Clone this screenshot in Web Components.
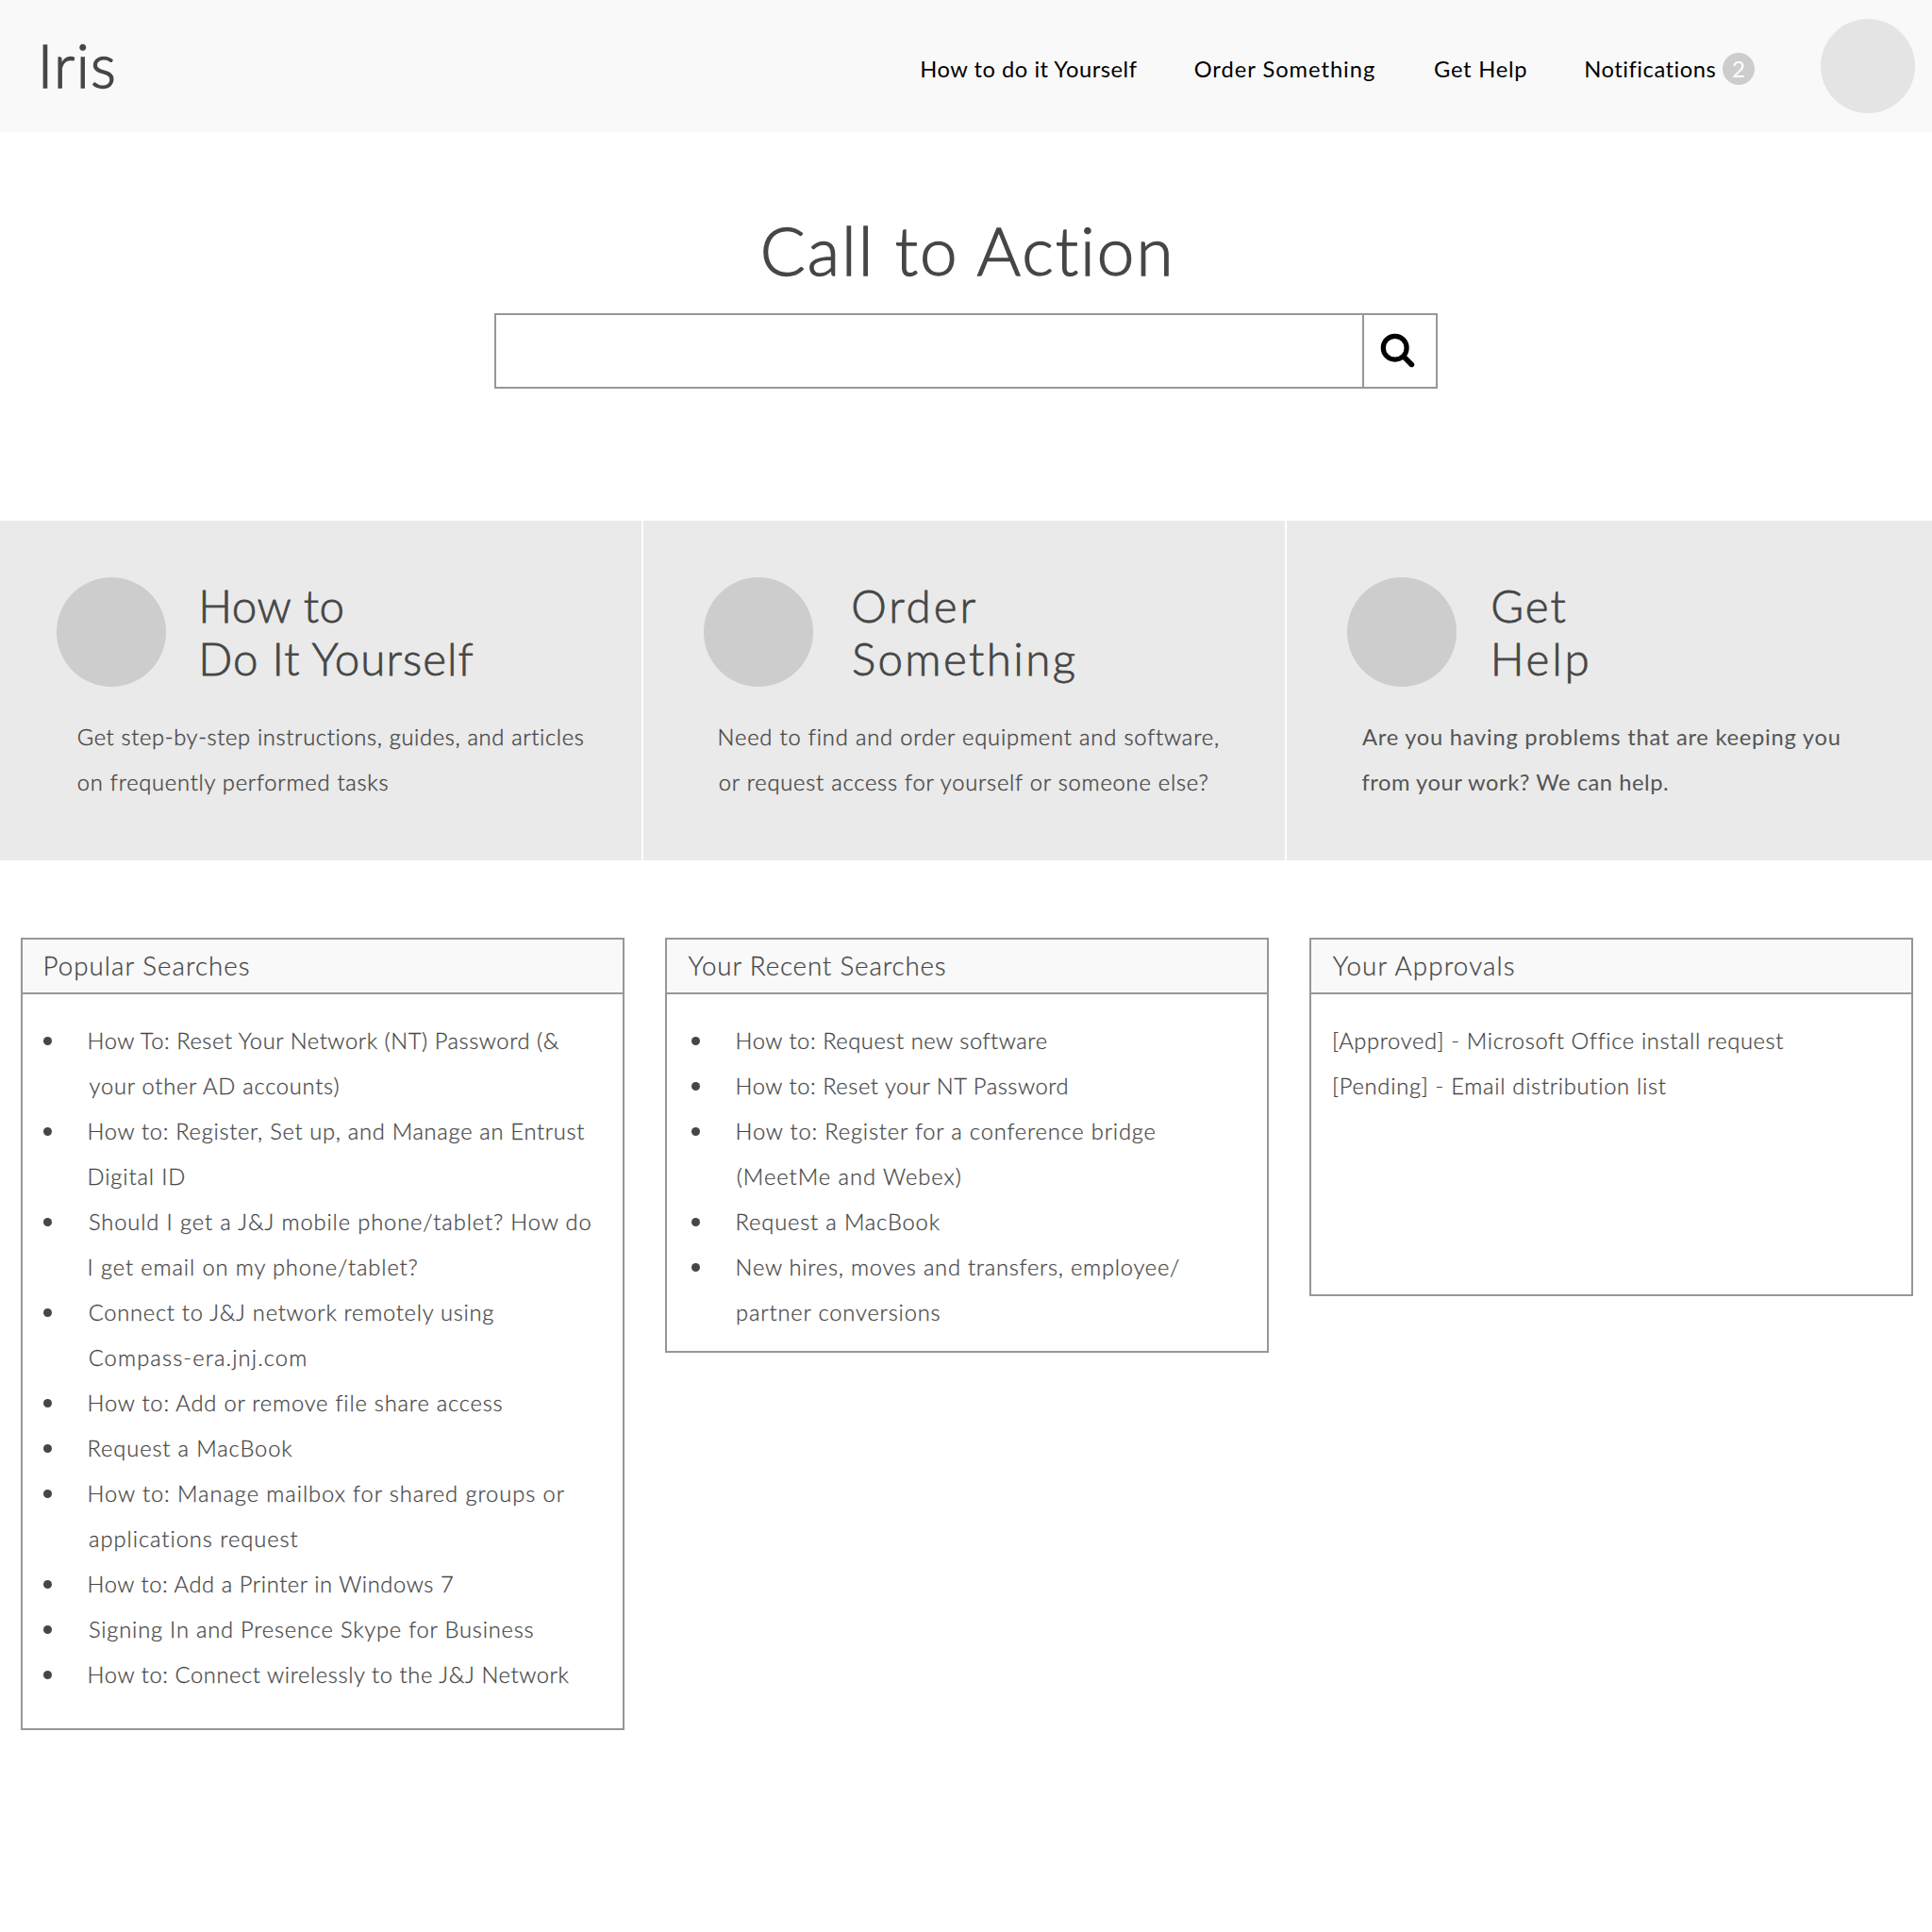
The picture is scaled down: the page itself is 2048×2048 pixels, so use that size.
<!DOCTYPE html>
<html lang="en">
<head>
<meta charset="utf-8">
<title>Iris</title>
<style>
  html, body { margin: 0; background: #fff; }
  body { font-family: Lato, "Open Sans", sans-serif; color: #464646; }
</style>
</head>
<body>
<iris-page>
  <iris-header slot="header">
    <fit-line slot="brand" w="75">Iris</fit-line>
    <fit-line w="227.5">How to do it Yourself</fit-line>
    <fit-line w="190.3" style="margin-left:61.8px">Order Something</fit-line>
    <fit-line w="96.7" style="margin-left:64px">Get Help</fit-line>
    <fit-line w="136.6" style="margin-left:63.7px">Notifications</fit-line>
    <count-badge>2</count-badge>
  </iris-header>

  <iris-search slot="hero"><fit-line w="430">Call to Action</fit-line></iris-search>

  <feature-card slot="feature" style="--inset:60px;--title-gap:38.7px;--text-inset:83px">
    <fit-line slot="title" w="148.3">How to</fit-line>
    <fit-line slot="title" w="286.6">Do It Yourself</fit-line>
    <fit-line w="535.3">Get step-by-step instructions, guides, and articles</fit-line>
    <fit-line w="327.7">on frequently performed tasks</fit-line>
  </feature-card>
  <feature-card slot="feature" style="--inset:64px;--title-gap:42.4px;--text-inset:81px">
    <fit-line slot="title" w="129.4">Order</fit-line>
    <fit-line slot="title" w="234.4">Something</fit-line>
    <fit-line w="528.1">Need to find and order equipment and software,</fit-line>
    <fit-line w="517">or request access for yourself or someone else?</fit-line>
  </feature-card>
  <feature-card slot="feature" style="--inset:64px;--title-gap:38.4px;--text-inset:80px;--weight:400;--ink:0;--text-color:#555">
    <fit-line slot="title" w="76.6">Get</fit-line>
    <fit-line slot="title" w="98" style="margin-left:1.8px">Help</fit-line>
    <fit-line w="505.7">Are you having problems that are keeping you</fit-line>
    <fit-line w="323.6">from your work? We can help.</fit-line>
  </feature-card>

  <list-panel slot="panel" style="height:840px">
    <fit-line slot="title" w="215.6" style="margin-left:24.2px">Popular Searches</fit-line>
    <bullet-item><fit-line w="497.4">How To: Reset Your Network (NT) Password (&amp;</fit-line><fit-line w="263.5">your other AD accounts)</fit-line></bullet-item>
    <bullet-item><fit-line w="524.6">How to: Register, Set up, and Manage an Entrust</fit-line><fit-line w="100">Digital ID</fit-line></bullet-item>
    <bullet-item><fit-line w="530.9">Should I get a J&amp;J mobile phone/tablet? How do</fit-line><fit-line w="347">I get email on my phone/tablet?</fit-line></bullet-item>
    <bullet-item><fit-line w="428.2">Connect to J&amp;J network remotely using</fit-line><fit-line w="228.7">Compass-era.jnj.com</fit-line></bullet-item>
    <bullet-item><fit-line w="437">How to: Add or remove file share access</fit-line></bullet-item>
    <bullet-item><fit-line w="214.4">Request a MacBook</fit-line></bullet-item>
    <bullet-item><fit-line w="503.2">How to: Manage mailbox for shared groups or</fit-line><fit-line w="220.6">applications request</fit-line></bullet-item>
    <bullet-item><fit-line w="385">How to: Add a Printer in Windows 7</fit-line></bullet-item>
    <bullet-item><fit-line w="470">Signing In and Presence Skype for Business</fit-line></bullet-item>
    <bullet-item><fit-line w="508">How to: Connect wirelessly to the J&amp;J Network</fit-line></bullet-item>
  </list-panel>
  <list-panel slot="panel" style="height:440px;--pad:25.5px">
    <fit-line slot="title" w="272.3" style="margin-left:22.6px">Your Recent Searches</fit-line>
    <bullet-item><fit-line w="327.2">How to: Request new software</fit-line></bullet-item>
    <bullet-item><fit-line w="349.1">How to: Reset your NT Password</fit-line></bullet-item>
    <bullet-item><fit-line w="442.3">How to: Register for a conference bridge</fit-line><fit-line w="235.7">(MeetMe and Webex)</fit-line></bullet-item>
    <bullet-item><fit-line w="213.8">Request a MacBook</fit-line></bullet-item>
    <bullet-item><fit-line w="467.8">New hires, moves and transfers, employee/</fit-line><fit-line w="213.8">partner conversions</fit-line></bullet-item>
  </list-panel>
  <list-panel slot="panel" style="height:380px;--pad:24.4px">
    <fit-line slot="title" w="192.1" style="margin-left:22.7px">Your Approvals</fit-line>
    <fit-line w="476.1">[Approved] - Microsoft Office install request</fit-line>
    <fit-line w="351.5">[Pending] - Email distribution list</fit-line>
  </list-panel>
</iris-page>

<script>
function define(name, html, setup) {
  const template = document.createElement('template');
  template.innerHTML = html;
  customElements.define(name, class extends HTMLElement {
    constructor() {
      super();
      this.attachShadow({ mode: 'open' }).append(template.content.cloneNode(true));
    }
    connectedCallback() { if (setup) setup(this); }
  });
}

define('iris-page', `
  <style>
    :host { display: block; width: 2048px; height: 2048px; overflow: hidden; background: #fff; }
    .features { display: grid; grid-template-columns: 680px 680px 1fr; gap: 2px; height: 360px; }
    .panels { display: flex; align-items: flex-start; gap: 43px; padding: 82px 20px 0 22px; }
  </style>
  <slot name="header"></slot>
  <slot name="hero"></slot>
  <section class="features"><slot name="feature"></slot></section>
  <section class="panels"><slot name="panel"></slot></section>`);

define('iris-header', `
  <style>
    :host { display: flex; align-items: center; box-sizing: border-box; height: 140px; padding: 0 18px 0 45.7px; background: #f9f9f9; }
    .brand { font-size: 63px; line-height: 80px; font-weight: 300; margin-top: -3px; -webkit-text-stroke: .022em; }
    nav { display: flex; align-items: center; margin-left: auto; padding-top: 5px; font-size: 23.7px; line-height: 34px; color: #000; }
    .avatar { width: 100px; height: 100px; border-radius: 50%; background: #e4e4e4; margin-left: 70px; }
  </style>
  <div class="brand"><slot name="brand"></slot></div>
  <nav><slot></slot></nav>
  <div class="avatar"></div>`);

define('count-badge', `
  <style>
    :host { display: grid; place-items: center; width: 34px; height: 34px; margin: 0 0 0 8px; border-radius: 50%; background: #cdcdcd; color: #fff; font-size: 24px; line-height: 34px; }
  </style>
  <span><slot></slot></span>`);

define('iris-search', `
  <style>
    :host { display: flex; flex-direction: column; align-items: center; box-sizing: border-box; height: 412px; padding-top: 85px; }
    h1 { margin: 0 0 27px; font-size: 71px; line-height: 80px; font-weight: 300; -webkit-text-stroke: .018em; }
    .box { display: flex; box-sizing: border-box; width: 1000px; height: 80px; border: 2px solid #979797; }
    input { flex: 1; min-width: 0; border: 0; outline: 0; padding: 0 20px; background: #fff; font: inherit; font-size: 24px; }
    button { flex: none; width: 78px; box-sizing: border-box; padding: 0; border: 0; border-left: 2px solid #979797; background: #fff; display: flex; }
    svg { width: 76px; height: 76px; }
  </style>
  <h1><slot></slot></h1>
  <div class="box">
    <input aria-label="Search">
    <button aria-label="Submit search">
      <svg viewBox="1446 334 76 76" fill="none" stroke="#000" stroke-linecap="round">
        <circle cx="1478.7" cy="368.7" r="12.4" stroke-width="5.2"/>
        <path d="M1489 379l7.4 7.4" stroke-width="5.6"/>
      </svg>
    </button>
  </div>`);

define('feature-card', `
  <style>
    :host { display: block; box-sizing: border-box; padding-top: 60px; background: #eaeaea; }
    .top { display: flex; align-items: flex-start; padding-left: var(--inset); height: 116px; }
    .dot { flex: none; width: 116px; height: 116px; border-radius: 50%; background: #cdcdcd; margin-right: var(--title-gap); }
    .title { padding-top: 2px; font-size: 47.5px; line-height: 56px; font-weight: 300; -webkit-text-stroke: .016em; }
    .text { padding: 28.8px 0 0 var(--text-inset); font-size: 23.7px; line-height: 48px; font-weight: var(--weight, 300); color: var(--text-color, inherit); -webkit-text-stroke: var(--ink, .016em); }
  </style>
  <div class="top"><div class="dot"></div><div class="title"><slot name="title"></slot></div></div>
  <div class="text"><slot></slot></div>`);

define('list-panel', `
  <style>
    :host { display: block; box-sizing: border-box; width: 640px; border: 2px solid #979797; background: #fff; font-weight: 300; -webkit-text-stroke: .016em; }
    header { height: 56px; border-bottom: 2px solid #979797; background: #f9f9f9; font-size: 27.7px; line-height: 56px; }
    .body { padding: 24.8px 0 0 var(--pad, 21.5px); font-size: 23.7px; line-height: 48px; }
  </style>
  <header><slot name="title"></slot></header>
  <div class="body"><slot></slot></div>`);

define('bullet-item', `
  <style>
    :host { display: flex; align-items: flex-start; }
    :host::before { content: ""; flex: none; width: 9px; height: 9px; border-radius: 50%; background: #464646; margin: 20px 40.5px 0 0; }
  </style>
  <div><slot></slot></div>`);

// One line of text, tracked so that its glyphs span exactly the "w" attribute.
define('fit-line', `
  <style>
    :host { display: block; white-space: nowrap; }
    span { display: block; width: max-content; }
  </style>
  <span><slot></slot></span>`, el => {
  const text = el.textContent.trim();
  const width = parseFloat(el.getAttribute('w'));
  const span = el.shadowRoot.querySelector('span');
  el.style.letterSpacing = '0.01px';
  const advance = span.getBoundingClientRect().width;
  const cs = getComputedStyle(el);
  const ctx = document.createElement('canvas').getContext('2d');
  // Side bearings are read at ten times the size, for sub-pixel precision.
  ctx.font = `${cs.fontWeight} ${parseFloat(cs.fontSize) * 10}px ${cs.fontFamily}`;
  const first = ctx.measureText(text[0]);
  const last = ctx.measureText(text[text.length - 1]);
  const left = -first.actualBoundingBoxLeft / 10;
  const right = (last.width - last.actualBoundingBoxRight) / 10;
  el.style.width = width + 'px';
  el.style.letterSpacing = (width - (advance - left - right)) / (text.length - 1) + 'px';
  span.style.marginLeft = -left + 'px';
});
</script>
</body>
</html>
